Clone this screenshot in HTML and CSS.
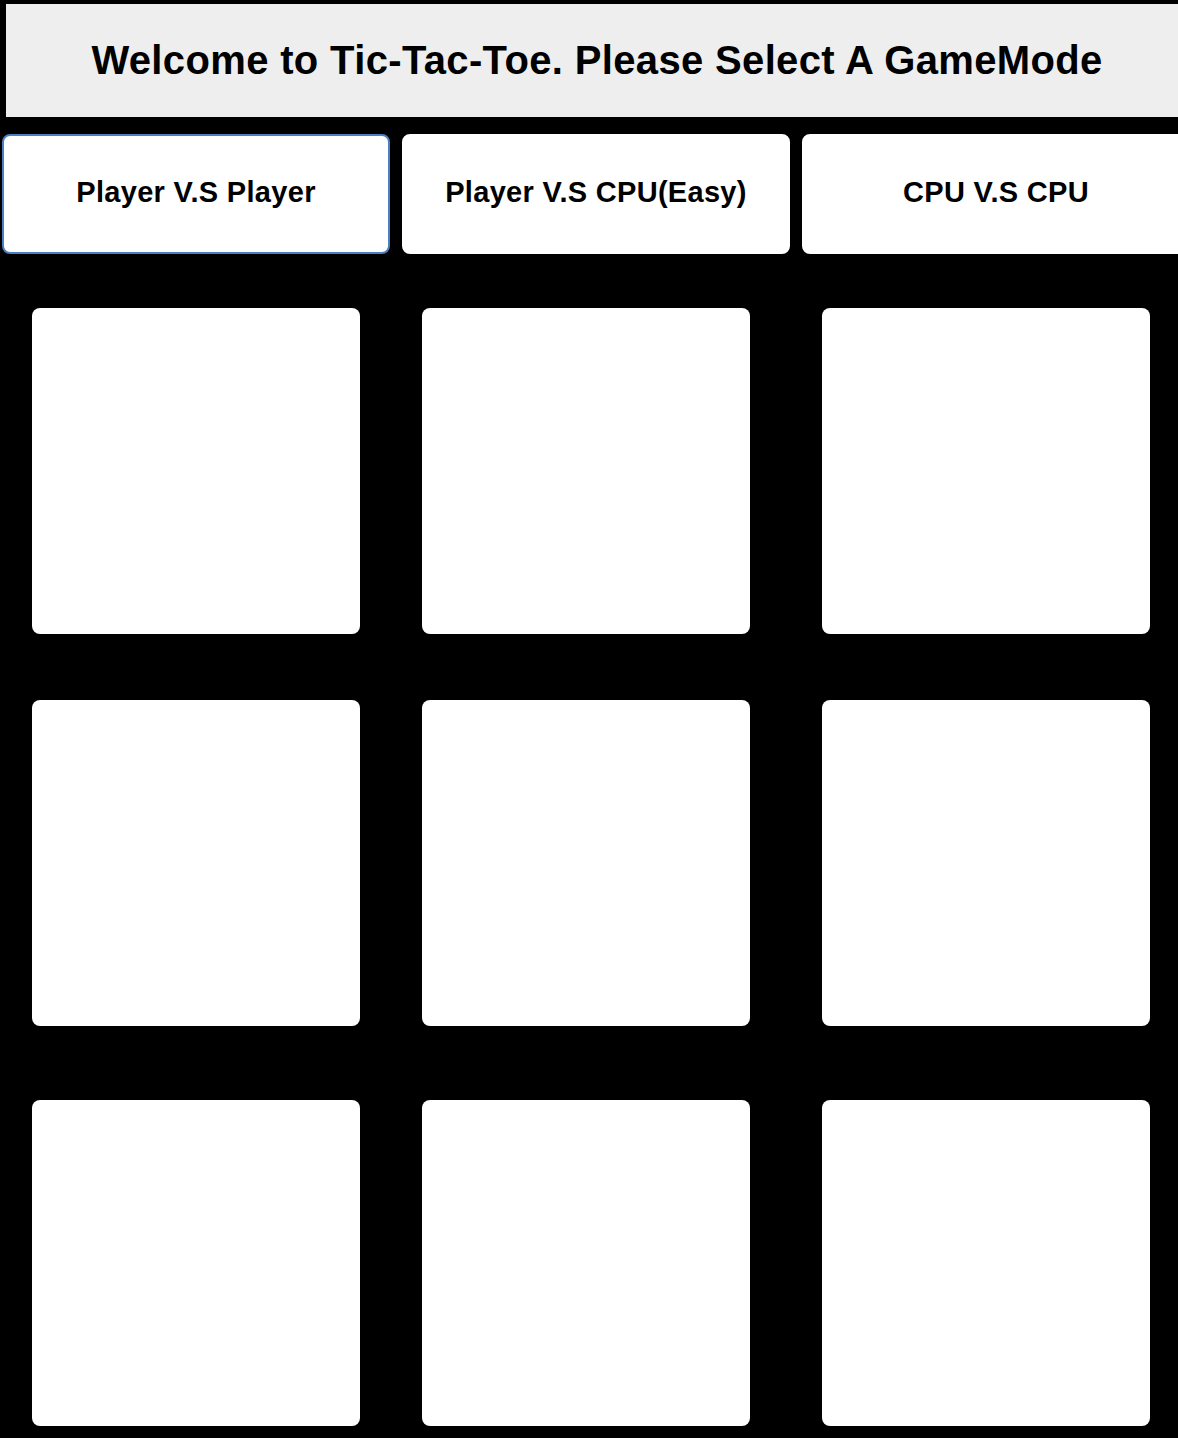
FILE: index.html
```html
<!DOCTYPE html>
<html>
<head>
<meta charset="utf-8">
<link rel="stylesheet" href="styles.css">
</head>
<body>
<div class="page">
  <h1 class="title">Welcome to Tic-Tac-Toe. Please Select A GameMode</h1>
  <div class="modes">
    <button class="mode mode-active">Player V.S Player</button>
    <button class="mode">Player V.S CPU(Easy)</button>
    <button class="mode">CPU V.S CPU</button>
  </div>
  <div class="board">
    <div class="cell"></div><div class="cell"></div><div class="cell"></div>
    <div class="cell"></div><div class="cell"></div><div class="cell"></div>
    <div class="cell"></div><div class="cell"></div><div class="cell"></div>
  </div>
</div>
</body>
</html>
```
FILE: styles.css
```css
html, body {
  margin: 0;
  padding: 0;
  background: #000;
  overflow: hidden;
  font-family: "Liberation Sans", Arial, Helvetica, sans-serif;
}
.page {
  width: 1200px;
  padding-top: 4px;
}
.title {
  margin: 0 0 0 6px;
  width: 1182px;
  height: 113px;
  box-sizing: border-box;
  background: #eeeeee;
  color: #000;
  font-size: 40px;
  letter-spacing: 0.35px;
  font-weight: bold;
  display: flex;
  align-items: center;
  justify-content: center;
  white-space: nowrap;
}
.modes {
  display: flex;
  gap: 12px;
  margin: 17px 0 0 2px;
}
.mode {
  flex: 0 0 388px;
  height: 120px;
  box-sizing: border-box;
  background: #fff;
  border: 2px solid #fff;
  border-radius: 8px;
  font-family: "Liberation Sans", Arial, Helvetica, sans-serif;
  font-size: 29px;
  letter-spacing: 0.3px;
  font-weight: bold;
  color: #000;
  padding: 0 0 4px 0;
}
.mode-active {
  border-color: #4a7fc1;
}
.board {
  display: grid;
  grid-template-columns: 390px 400px 328px;
  grid-template-rows: 392px 400px 326px;
  margin: 54px 0 0 32px;
}
.cell {
  width: 328px;
  height: 326px;
  background: #fff;
  border-radius: 8px;
}
```
